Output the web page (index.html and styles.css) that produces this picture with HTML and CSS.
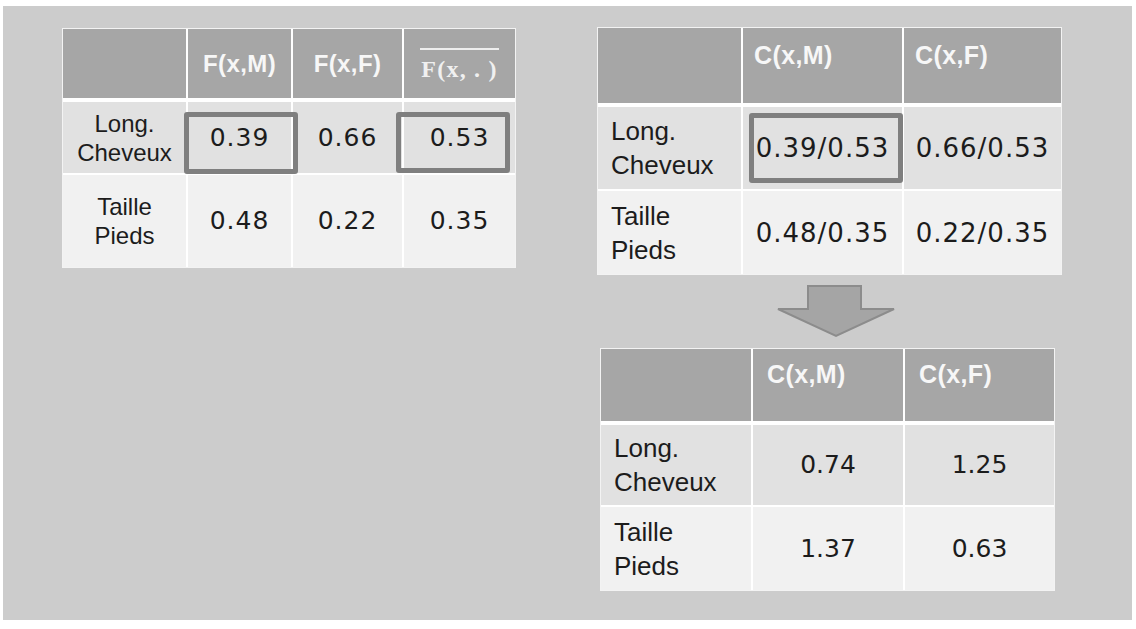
FILE: index.html
```
<!DOCTYPE html>
<html lang="fr">
<head>
<meta charset="utf-8">
<title>Tables</title>
<link rel="stylesheet" href="styles.css">
</head>
<body>
<div class="slide">
  <div class="left">
    <table class="t t1">
      <thead>
        <tr>
          <th class="c1"></th>
          <th class="c2">F(x,M)</th>
          <th class="c3">F(x,F)</th>
          <th class="c4"><span class="fbar"><b>F</b>(<b>x</b>, . )</span></th>
        </tr>
      </thead>
      <tbody>
        <tr class="r1">
          <td class="lab">Long.<br>Cheveux</td>
          <td class="num hl hl-a">0.39</td>
          <td class="num">0.66</td>
          <td class="num hl hl-b">0.53</td>
        </tr>
        <tr class="r2">
          <td class="lab">Taille<br>Pieds</td>
          <td class="num">0.48</td>
          <td class="num">0.22</td>
          <td class="num">0.35</td>
        </tr>
      </tbody>
    </table>
  </div>
  <div class="right">
    <table class="t t2">
      <thead>
        <tr>
          <th class="c1"></th>
          <th class="c2">C(x,M)</th>
          <th class="c3">C(x,F)</th>
        </tr>
      </thead>
      <tbody>
        <tr class="r1">
          <td class="lab">Long.<br>Cheveux</td>
          <td class="num hl hl-c">0.39/0.53</td>
          <td class="num">0.66/0.53</td>
        </tr>
        <tr class="r2">
          <td class="lab">Taille<br>Pieds</td>
          <td class="num">0.48/0.35</td>
          <td class="num">0.22/0.35</td>
        </tr>
      </tbody>
    </table>
    <svg class="arrow" width="120" height="54" viewBox="0 0 120 54">
      <polygon points="32,1 85,1 85,24 118,24 60,51 2,24 32,24" fill="#a5a5a5" stroke="#8c8c8c" stroke-width="2" stroke-linejoin="miter"/>
    </svg>
    <table class="t t3">
      <thead>
        <tr>
          <th class="c1"></th>
          <th class="c2">C(x,M)</th>
          <th class="c3">C(x,F)</th>
        </tr>
      </thead>
      <tbody>
        <tr class="r1">
          <td class="lab">Long.<br>Cheveux</td>
          <td class="num">0.74</td>
          <td class="num">1.25</td>
        </tr>
        <tr class="r2">
          <td class="lab">Taille<br>Pieds</td>
          <td class="num">1.37</td>
          <td class="num">0.63</td>
        </tr>
      </tbody>
    </table>
  </div>
</div>
</body>
</html>
```
FILE: styles.css
```
html, body {
  margin: 0;
  background: #ffffff;
}

.slide {
  display: flex;
  align-items: flex-start;
  box-sizing: border-box;
  margin: 6px 4px 0 3px;
  height: 614px;
  padding: 22px 0 0 59px;
  background: #cccccc;
  font-family: "Liberation Sans", Arial, sans-serif;
}

.right {
  display: flex;
  flex-direction: column;
  align-items: flex-start;
  margin-left: 81px;
  margin-top: -1px;
}

/* generic table */
.t {
  border-collapse: separate;
  border-spacing: 0;
  table-layout: fixed;
  border: 1px solid #f3f3f3;
  color: #1c1c1c;
}

.t th,
.t td {
  box-sizing: border-box;
  padding: 0;
  border-left: 2px solid #ffffff;
}

.t th:first-child,
.t td:first-child {
  border-left: 0;
}

.t thead th {
  background: #a6a6a6;
  border-bottom: 4px solid #ffffff;
  color: #f7f7f7;
  font: bold 24px/30px "Liberation Sans", Arial, sans-serif;
  letter-spacing: 0.4px;
}

.t .r1 td {
  background: #e1e1e1;
  border-bottom: 2px solid #ffffff;
}

.t .r2 td {
  background: #f1f1f1;
}

.num {
  font: 25px/30px "DejaVu Sans", sans-serif;
  text-align: center;
  letter-spacing: 1px;
}

.lab {
  font: 24px/29px "Liberation Sans", Arial, sans-serif;
}

/* table 1 */
.t1 {
  width: 454px;
}
.t1 .c1 { width: 123px; }
.t1 .c2 { width: 105px; }
.t1 .c3 { width: 111px; }
.t1 .c4 { width: 113px; }
.t1 thead th {
  height: 73px;
  text-align: center;
  vertical-align: middle;
}
.t1 .r1 td { height: 73px; }
.t1 .r2 td { height: 92px; }
.t1 .lab { text-align: center; }

.fbar {
  display: inline-block;
  border-top: 2px solid #eeeeee;
  padding: 7px 1px 0;
  font: bold 24px/24px "Liberation Serif", "Times New Roman", serif;
  color: #f0f0f0;
  letter-spacing: 1.2px;
  position: relative;
  top: 2px;
}
.fbar b {
  font-weight: bold;
}

/* table 2 */
.t2 {
  width: 465px;
}
.t2 .c1 { width: 143px; }
.t2 .c2 { width: 161px; }
.t2 .c3 { width: 159px; }
.t2 thead th,
.t3 thead th {
  text-align: left;
  vertical-align: top;
  padding: 12px 0 0 11px;
  font-size: 25px;
}
.t2 thead th { height: 79px; }
.t2 .r1 td { height: 84px; }
.t2 .r2 td { height: 83px; }
.t2 .num {
  font-size: 26px;
  letter-spacing: 1px;
}
.t2 .lab,
.t3 .lab {
  font-size: 26px;
  line-height: 34px;
  padding-left: 13px;
}

/* arrow */
.arrow {
  display: block;
  margin: 10px 0 9px 179px;
}

/* table 3 */
.t3 {
  width: 455px;
  margin-left: 3px;
}
.t3 .c1 { width: 150px; }
.t3 .c2 { width: 152px; }
.t3 .c3 { width: 151px; }
.t3 thead th {
  height: 76px;
  padding: 10px 0 0 14px;
}
.t3 .r1 td { height: 82px; }
.t3 .r2 td { height: 83px; }
.t3 .num {
  letter-spacing: 0;
}

/* highlight boxes (overlays) */
.hl {
  position: relative;
}
.hl::after {
  content: "";
  position: absolute;
  border: 5px solid #7f7f7f;
  border-radius: 3px;
  box-sizing: border-box;
}
.hl-a::after {
  left: -4px;
  right: -7px;
  top: 10px;
  bottom: -1px;
}
.hl-b::after {
  left: -8px;
  right: 5px;
  top: 10px;
  bottom: 0;
}
.hl-c::after {
  left: 6px;
  right: -1px;
  top: 6px;
  bottom: 6px;
}
```
